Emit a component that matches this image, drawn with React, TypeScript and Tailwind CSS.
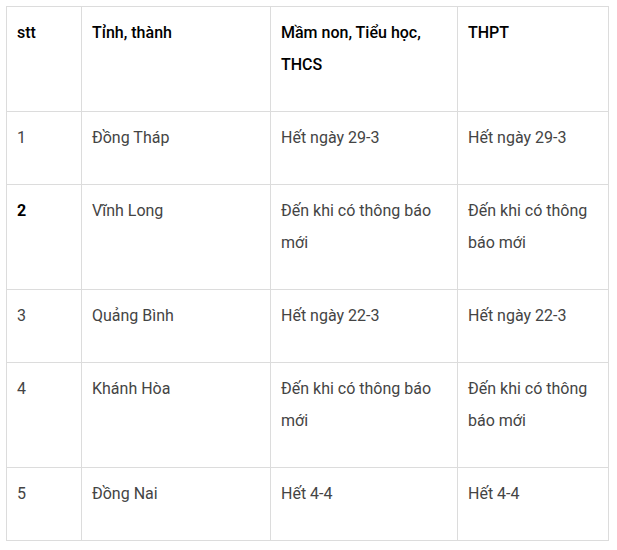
const rows = [
  { stt: '1', province: 'Đồng Tháp', primary: 'Hết ngày 29-3', high: 'Hết ngày 29-3' },
  { stt: '2', province: 'Vĩnh Long', primary: 'Đến khi có thông báo mới', high: 'Đến khi có thông báo mới', bold: true },
  { stt: '3', province: 'Quảng Bình', primary: 'Hết ngày 22-3', high: 'Hết ngày 22-3' },
  { stt: '4', province: 'Khánh Hòa', primary: 'Đến khi có thông báo mới', high: 'Đến khi có thông báo mới' },
  { stt: '5', province: 'Đồng Nai', primary: 'Hết 4-4', high: 'Hết 4-4' },
]

const Cell = ({ children, head = false, bold = false }: { children: React.ReactNode; head?: boolean; bold?: boolean }) => (
  <td className="border border-[#dcdcdc] px-[10px] pt-[10px] pb-[10px] align-top">
    <p
      className={`mb-[20px] leading-[32px] text-[16px] ${
        head ? 'font-medium text-black' : bold ? 'font-bold text-black' : 'text-[#444]'
      }`}
    >
      {children}
    </p>
  </td>
)

export default function App() {
  return (
    <div className="bg-white w-[617px] h-[550px] pt-[6px] pl-[6px] font-['Roboto',sans-serif]">
      <table className="table-fixed border-collapse w-[602px]">
        <colgroup>
          <col className="w-[75px]" />
          <col className="w-[189px]" />
          <col className="w-[187px]" />
          <col className="w-[151px]" />
        </colgroup>
        <tbody>
          <tr>
            <Cell head>stt</Cell>
            <Cell head>Tỉnh, thành</Cell>
            <Cell head>Mầm non, Tiểu học, THCS</Cell>
            <Cell head>THPT</Cell>
          </tr>
          {rows.map((r) => (
            <tr key={r.stt}>
              <Cell bold={r.bold}>{r.stt}</Cell>
              <Cell>{r.province}</Cell>
              <Cell>{r.primary}</Cell>
              <Cell>{r.high}</Cell>
            </tr>
          ))}
        </tbody>
      </table>
    </div>
  )
}
